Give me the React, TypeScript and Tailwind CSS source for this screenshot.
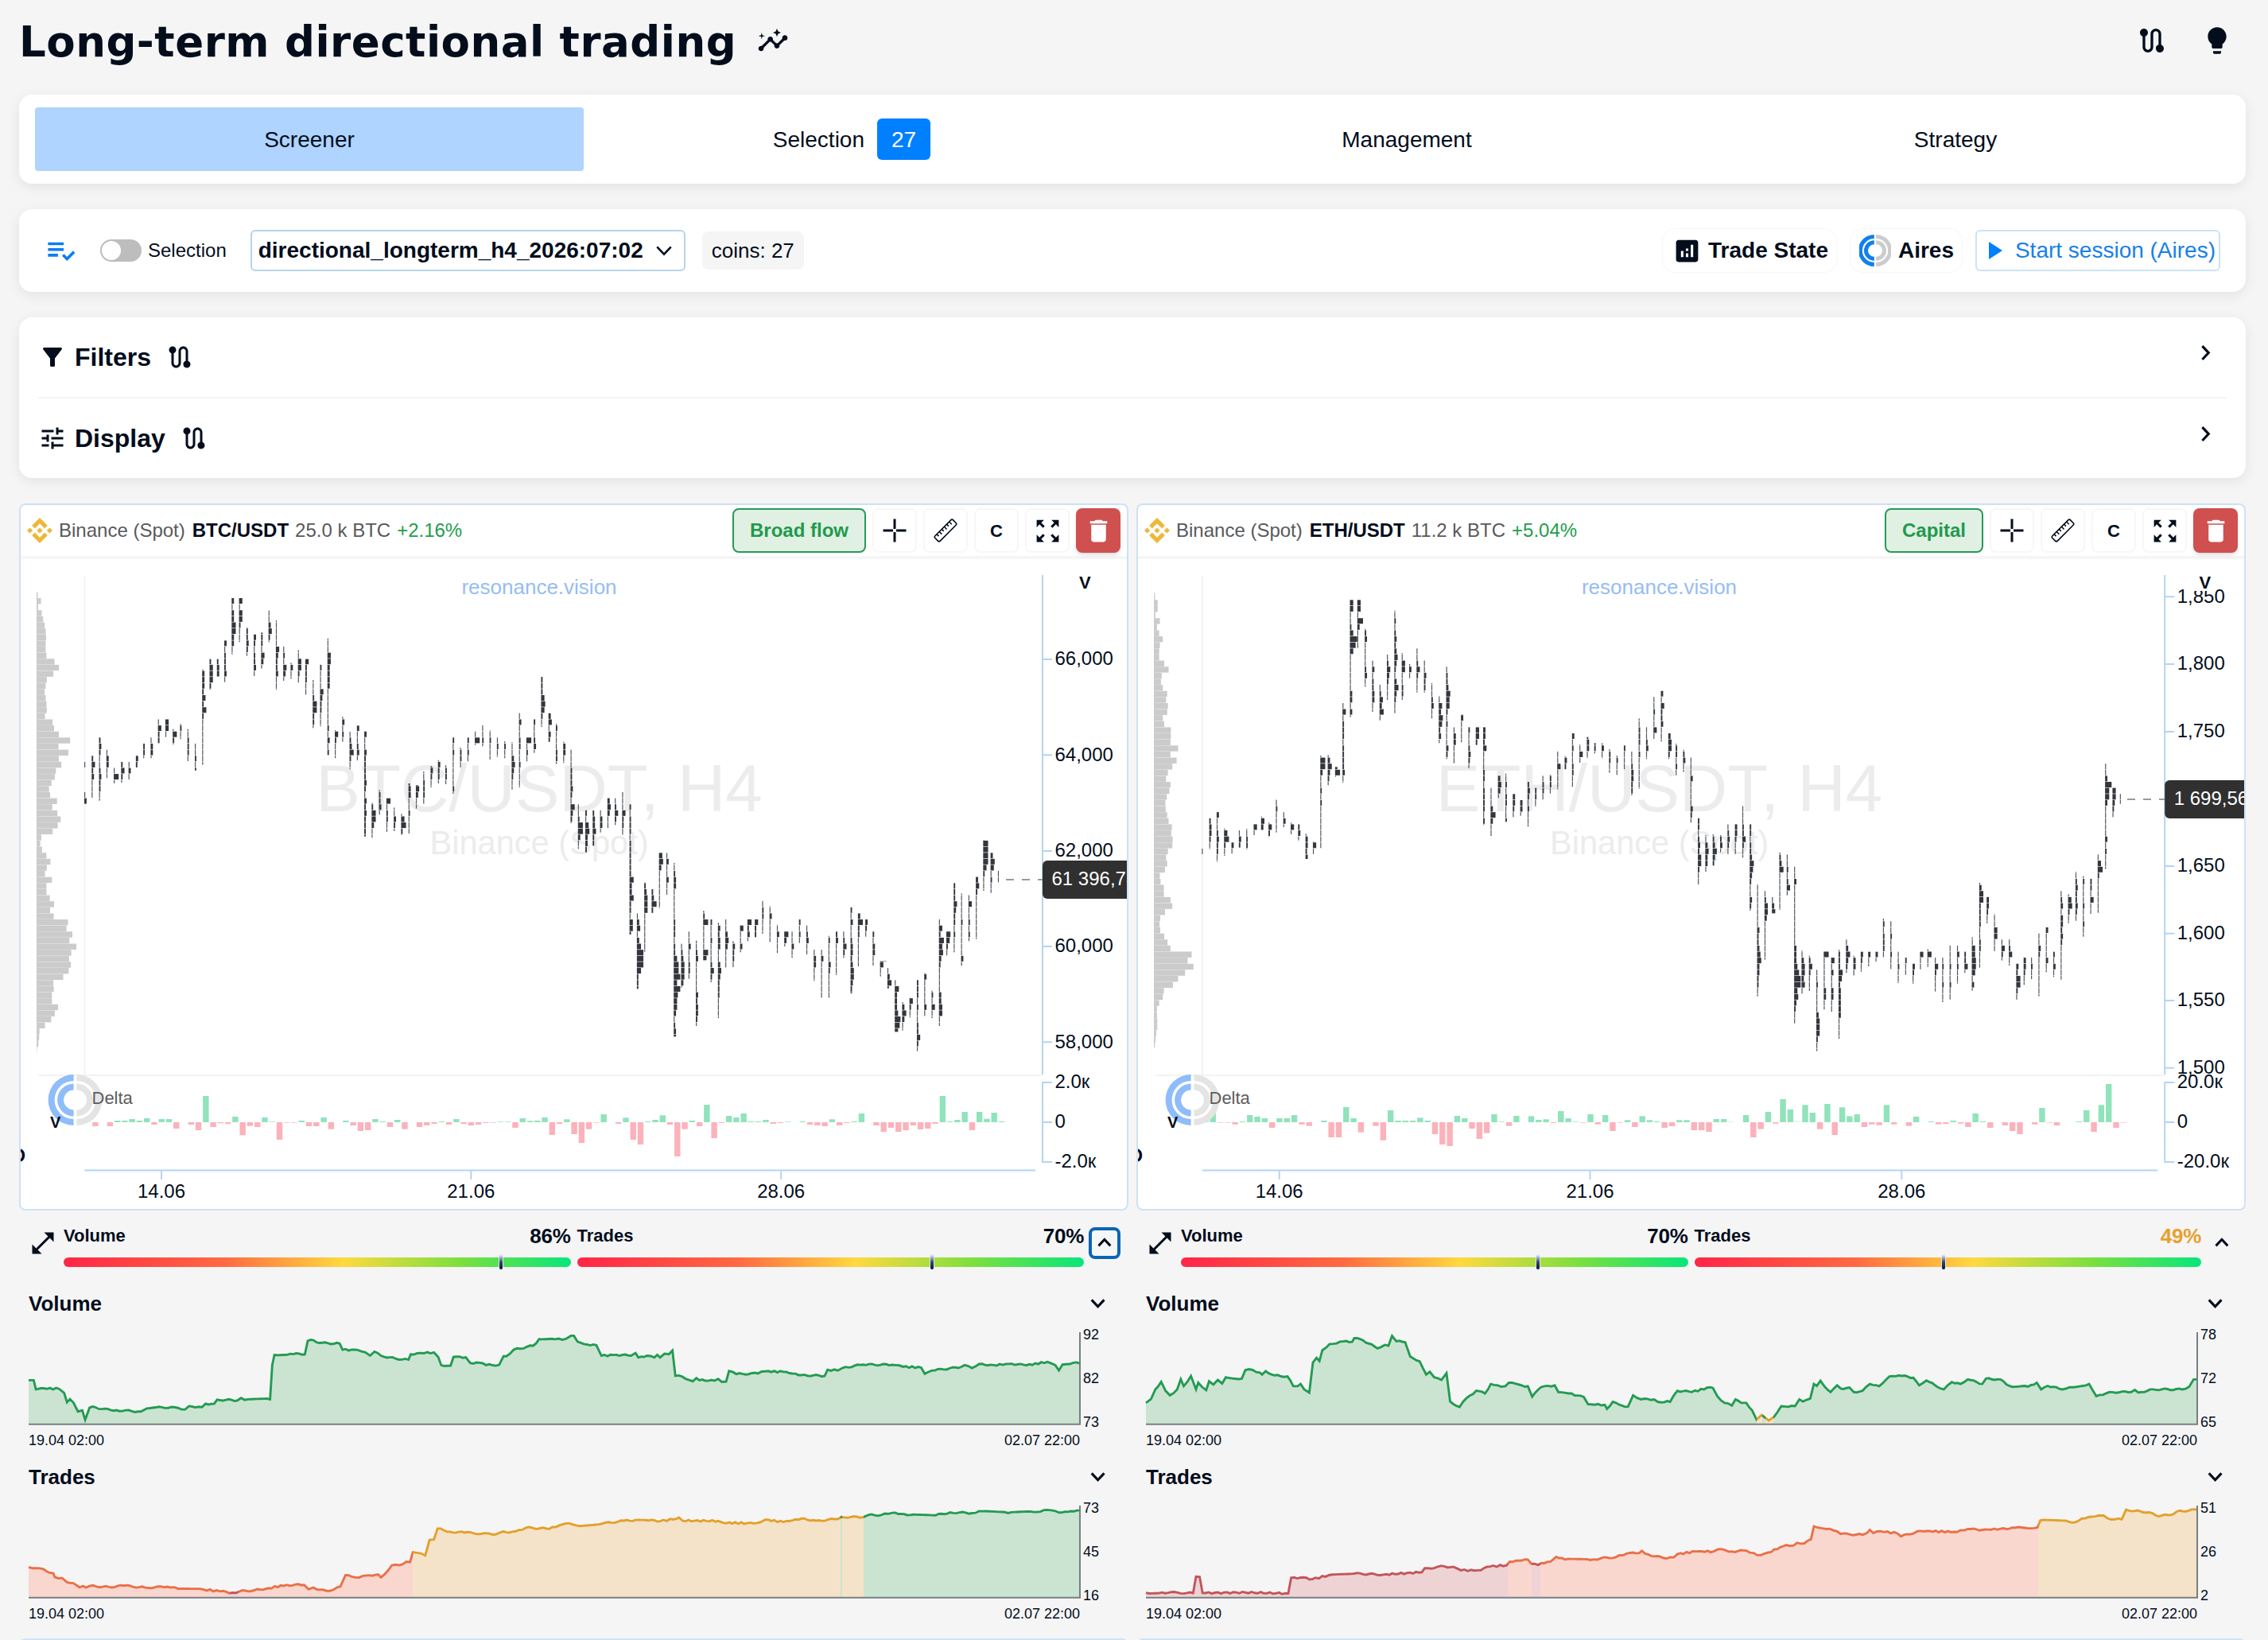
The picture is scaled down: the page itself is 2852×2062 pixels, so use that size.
import type { ReactNode } from 'react'
import {
  MdAnalytics,
  MdDelete,
  MdFilterAlt,
  MdInsights,
  MdLightbulb,
  MdOpenInFull,
  MdPlaylistAddCheck,
  MdRoute,
  MdTune,
  MdZoomOutMap,
} from 'react-icons/md'
import { SiBinance } from 'react-icons/si'

// Each candle is "top bottom widths": prices in thirds of a pixel, one width digit per cluster row
const BTC_CANDLES = `1014 1172 1000013;991 1150 2423111;922 1160 23211232211;968 1075 13311;1036 1095 161;1014 1092 2421;1014 1082 131;991 1036 32;945 1000 221;922 1000 1331
853 945 1422;853 920 441;890 948 152;870 928 121;890 1011 112221;943 1046 112122;665 1025 13332425211111111;626 742 24442;626 695 233;556 713 3122231
396 608 3133553311;396 562 41442111;506 614 122321;533 690 3212231;526 662 2221431;443 562 113421;480 742 111114322311;579 708 121431;640 700 1311;592 718 1144211
626 762 422211;705 886 111255221;646 880 21114322111;548 988 11144333311111121312;894 1000 142111;844 938 13121;900 1042 1235211;877 1008 311231;898 1295 3113222232132322221;1168 1300 1255311
1120 1213 12231;1151 1278 512211;1186 1275 11321;1210 1290 1462;1095 1284 233112111;1101 1190 3431;1050 1175 1122211;1030 1110 2321;1007 1095 13221;1026 1098 1221
922 1134 2121111121;960 1035 1221;922 1012 2121;898 950 161;876 955 1121;896 1005 21211;920 995 2121;936 1000 121;940 1118 111343211;828 1110 11311221121111
922 1012 6121;853 980 211231;693 882 222454211;828 938 134132;870 1022 12111221;938 1018 1331;966 1245 1112223215321;1174 1342 11266311;1195 1355 2145332;1197 1330 233422
1195 1280 1331;1150 1265 34311;1150 1252 12421;1127 1290 11142211;1174 1665 2122212222225335221442;1585 1870 13413588852221;1468 1730 1234441111111;1492 1585 2362;1357 1565 453111111;1357 1517 1311311
1395 2050 1123311111222122466848544312332;1700 1865 12344431;1653 1832 11311221;1688 2010 112311111323321;1575 1762 126111164;1608 1845 21121112421;1620 1980 1323311343222111;1608 1790 113431111;1690 1788 13221;1630 1732 41131
1608 1690 5231;1608 1675 422;1537 1662 212211;1558 1693 1131111;1628 1735 11311;1653 1710 531;1653 1753 11311;1608 1697 2121;1631 1740 12311;1722 1840 133111
1722 1907 131111111;1670 1907 12111321111;1653 1818 23111111;1653 1753 12421;1562 1887 213112332344322;1585 1785 362211111;1608 1673 321;1653 1782 2133111;1765 1823 84;1790 1868 13521
1835 2032 1533347641;1920 2027 13531;1903 1978 1421;1835 2105 222121122421;1810 1975 13111131;1877 1980 12141;1606 2010 2142645321111334411;1653 1747 5421;1470 1732 222432212111;1510 1783 111112111113
1515 1690 14112121;1446 1682 63421111111;1308 1500 266664211;1357 1508 3541211;1423 1468 11`

const ETH_CANDLES = `1341 1362 1;1226 1343 23321;1203 1390 311232211;1265 1368 14621;1318 1360 31;1272 1337 132;1266 1343 11221;1249 1290 41;1220 1273 143;1243 1297 142
1155 1280 1121111;1203 1260 131;1243 1287 141;1249 1310 231;1285 1380 133231;1314 1362 141;990 1340 1663112121111111;988 1102 135321;1033 1070 36;792 1092 141222122223
403 845 44112497411111133131;403 585 44173111;512 730 1231111231;632 825 131223311;723 857 124351;609 780 12432111;443 830 112123234321353211;603 780 114411221;645 698 131;586 752 1124211
630 752 113221;717 850 1112311;765 943 114354231;655 1003 1223544212111321;882 1022 1331111;835 940 33111;883 1038 2112321;883 953 442;883 1252 33241112212222121;1112 1295 11136311
1066 1150 3431;1058 1240 112122112;1135 1222 3321;1158 1217 331;1089 1258 23212111;1112 1183 221;1066 1158 1221;1062 1133 122;973 1117 1141111;992 1043 132
906 1108 312112211;948 1017 114;920 1000 2331;943 982 22;943 1000 131;966 1055 1221;990 1063 1211;952 1043 2111;975 1140 1123322;850 1115 112221211111
883 1003 112311;768 930 1121141;746 937 31422311;906 1003 3442;945 1067 122121;968 1052 1231;996 1243 11131111321;1226 1478 22123244211;1290 1428 1134331;1287 1405 1235321
1290 1355 1231;1249 1363 12321;1249 1363 33211;1180 1375 111224211;1249 1575 22122354321132;1475 1898 11111111322345332211;1500 1760 12443111111;1523 1585 1341;1355 1572 1235111111;1362 1517 1121241
1408 2000 1131111111111333468845321;1725 1888 11344341;1745 1878 124211;1798 2105 1121111344421;1728 1948 6111113311;1750 1960 1413113311;1722 2058 122254233333111;1683 1810 135321;1745 1822 1331;1730 1805 3211
1730 1785 311;1730 1767 31;1605 1753 1212221;1613 1795 11121121;1730 1848 11211;1750 1817 1211;1775 1850 3211;1730 1800 411;1720 1787 151;1750 1880 114211
1750 1920 1121121;1705 1910 111211211;1707 1850 1312111;1730 1810 2241;1675 1877 114455413;1470 1790 13552222112211;1523 1623 33211;1588 1728 111441;1682 1763 1421;1682 1782 12411
1775 1913 325521;1750 1855 13321;1750 1833 1121;1660 1898 1132111111;1637 1807 31111311;1730 1825 2131;1500 1835 123133232111111;1513 1622 14521;1428 1617 112322321;1445 1673 1211121121
1453 1587 222141;1362 1583 1462111111;1020 1418 11385531111131211;1110 1222 44321;1133 1172 11`

const BTC_PROFILE = '3 12 4 14 18 22 25 26 25 25 27 49 61 46 28 25 22 25 27 28 23 44 48 61 92 60 87 61 68 53 50 41 34 37 56 43 57 66 58 44 13 10 15 27 38 28 23 42 27 27 36 48 37 47 86 82 98 90 109 95 89 94 88 73 46 47 42 42 59 50 40 23 8 7 5 1'
const ETH_PROFILE = '1 10 10 3 16 8 14 24 16 14 14 28 40 21 19 24 36 33 38 36 24 28 46 46 45 66 45 62 50 38 33 45 42 35 31 32 36 40 49 47 51 50 38 33 36 30 16 18 27 27 45 50 30 17 15 17 28 37 45 103 92 108 85 66 52 27 24 14 8 8 9 9 6 4 1'

const BTC_DELTA = '0 -15 0 -15 6 6 12 6 15 -9 12 12 -24 0 -9 -30 99 -18 -4 -6 21 -49 -14 -18 18 2 -66 -2 -2 6 -15 -15 18 -26 0 6 -12 -33 -30 12 3 -18 9 -26 0 -18 -12 -6 3 -9 12 -6 -12 -9 -3 -2 2 2 -21 15 5 6 18 -48 -6 11 -45 -78 -26 -2 30 0 -6 17 -66 -84 3 9 26 -9 -129 -26 6 -15 66 -60 -3 24 18 33 3 3 9 -6 -3 2 0 3 -9 -12 -15 11 -12 -3 3 33 0 -12 -36 -21 -36 -30 -12 -27 -24 -6 99 3 9 39 -30 39 13 36 3'
const ETH_DELTA = '6 36 -2 -2 -8 3 27 21 15 -21 15 15 27 -8 -14 0 6 -57 -57 57 15 -38 0 -14 -68 45 6 6 6 17 6 -45 -84 -90 24 15 -24 -63 -41 30 2 -14 24 0 23 9 11 -3 42 15 2 -2 30 -8 27 -33 -2 8 -18 23 8 3 -21 -15 8 8 -30 -30 -36 12 12 1 0 27 -57 -26 39 -5 87 48 1 65 36 -26 69 -48 56 23 30 -18 -8 -11 65 -8 0 -14 21 0 3 -8 -6 6 -5 -18 33 3 -21 0 -12 -33 -45 0 -8 54 -2 -12 0 0 3 45 -36 65 144 -21 -2'

const BTC_VOLUME = '39,606 46,606 49,640 56,636 81,638 88,653 92,688 96,676 101,690 107,722 113,718 117,753 123,708 131,706 140,713 160,717 190,722 210,708 240,706 255,714 260,702 278,706 283,693 295,693 299,678 327,681 332,672 337,679 372,677 375,550 378,512 400,508 420,510 424,460 432,458 440,468 468,470 472,493 493,494 503,502 510,515 516,500 525,515 545,526 563,530 566,510 575,506 598,503 604,520 608,550 621,552 625,520 642,521 648,542 665,543 670,550 688,549 694,517 698,517 708,493 735,478 743,454 765,454 780,453 787,441 791,441 796,463 805,472 822,476 829,515 850,512 870,515 876,505 880,522 892,515 902,522 906,512 910,522 916,508 922,510 927,496 931,590 940,592 955,610 960,598 964,606 985,608 990,601 995,612 1001,611 1005,572 1015,583 1045,581 1055,573 1080,575 1105,587 1137,590 1141,567 1155,570 1162,560 1190,548 1230,549 1245,556 1270,559 1275,582 1285,570 1325,557 1330,550 1340,561 1350,546 1370,550 1395,545 1415,551 1444,538 1455,550 1460,570 1465,548 1480,541 1489,544'
const BTC_TRADES = '39,1298 50,1302 60,1306 68,1319 73,1321 75,1335 85,1338 92,1354 100,1357 109,1373 114,1368 118,1374 123,1368 150,1372 170,1367 200,1374 230,1371 245,1378 280,1381 303,1388 320,1393 330,1388 350,1384 370,1376 395,1364 419,1364 425,1380 432,1374 440,1382 450,1386 460,1381 469,1370 476,1328 490,1336 505,1329 521,1325 525,1336 530,1325 540,1291 555,1287 560,1278 565,1280 569,1243 580,1247 586,1255 592,1197 598,1196 603,1155 620,1167 640,1170 683,1177 690,1169 710,1166 725,1152 757,1156 780,1136 795,1144 830,1137 860,1126 880,1123 890,1124 910,1128 933,1118 936,1114 941,1126 990,1127 997,1134 1030,1135 1048,1132 1055,1122 1080,1131 1105,1118 1125,1126 1155,1120 1160,1112 1190,1113 1197,1105 1215,1105 1230,1097 1255,1105 1290,1106 1310,1095 1340,1098 1355,1091 1390,1098 1425,1094 1444,1086 1455,1090 1460,1096 1489,1088'
const ETH_VOLUME = '23,690 30,676 36,640 44,612 50,645 56,662 66,640 71,602 75,628 85,590 92,640 95,615 106,643 110,610 116,622 122,605 128,618 133,595 155,600 160,568 170,568 180,578 183,585 188,572 200,588 218,592 226,628 232,628 236,620 241,640 248,652 253,540 258,523 262,535 266,495 276,472 295,462 307,464 310,450 322,458 330,470 342,488 352,475 357,478 362,442 368,462 380,465 387,518 400,536 409,585 414,575 420,595 430,605 437,580 442,685 455,705 460,685 478,645 490,655 498,620 512,630 518,628 523,615 545,630 549,628 555,667 567,632 586,625 591,650 605,655 626,668 632,695 655,697 658,712 666,686 675,697 687,704 694,662 705,677 723,677 728,686 745,686 755,645 775,650 800,632 804,635 810,665 820,690 830,700 835,677 843,690 850,690 858,718 864,752 871,735 876,745 881,755 888,742 898,702 917,702 923,677 928,685 938,674 943,620 947,627 952,608 958,630 966,650 975,625 980,637 992,633 998,650 1010,645 1020,620 1033,628 1047,592 1060,588 1080,597 1088,625 1098,607 1110,625 1122,640 1133,613 1145,620 1155,603 1175,620 1180,600 1200,603 1212,627 1238,630 1250,615 1256,640 1265,627 1285,640 1300,632 1322,620 1332,665 1350,650 1380,650 1385,642 1390,652 1410,640 1450,640 1460,630 1466,603 1471,603'
const ETH_TRADES = '23,1393 45,1392 88,1394 92,1333 97,1334 101,1394 160,1392 219,1396 223,1338 240,1336 252,1343 275,1328 310,1322 350,1326 403,1317 407,1302 420,1302 430,1293 450,1301 457,1310 480,1310 497,1296 520,1291 524,1278 549,1270 554,1286 563,1290 568,1283 580,1278 588,1260 600,1270 635,1272 650,1265 670,1261 685,1248 703,1245 706,1238 711,1249 735,1264 750,1262 755,1250 780,1240 805,1240 811,1232 830,1240 850,1237 865,1254 880,1244 905,1216 915,1218 920,1208 930,1210 939,1195 943,1147 965,1156 980,1175 1010,1178 1016,1172 1020,1160 1025,1172 1035,1165 1058,1173 1063,1184 1090,1164 1140,1168 1155,1157 1175,1160 1200,1156 1220,1152 1251,1151 1255,1125 1290,1126 1303,1132 1312,1118 1335,1107 1342,1107 1348,1118 1367,1121 1373,1085 1385,1090 1405,1095 1415,1108 1435,1105 1443,1092 1471,1085'

const GREEN = ['#239b52', '#cbe4d2']
const AMBER = ['#e3a02b', '#f4e3c9']
const ORANGE = ['#ea7048', '#f9d6ce']
const RED = ['#c4555b', '#eed3d5']

type Band = { to: number; tone: string[] }

type Mini = {
  id: string
  title: string
  points: string
  x0: number
  y0: number
  labels: string[]
  bands: Band[]
}

type Coin = {
  symbol: string
  volume: string
  change: string
  tag: string
  left: number
  firstX: number
  step: number
  rowTop: number
  profileX: number
  plotX: number
  axisX: number
  center: number
  logoX: number
  vX: number
  candles: string
  profile: string
  delta: string
  prices: [string, number][]
  times: [string, number][]
  deltaMax: string
  last: string
  lastY: number
  dashX: number
  gauges: [number, number]
  focused: boolean
  minis: Mini[]
}

const COINS: Coin[] = [
  {
    symbol: 'BTC/USDT',
    volume: '25.0 k BTC',
    change: '+2.16%',
    tag: 'Broad flow',
    left: 26,
    firstX: 106.6,
    step: 9.265,
    rowTop: 396,
    profileX: 46,
    plotX: 106.5,
    axisX: 1311,
    center: 678,
    logoX: 95,
    vX: 1357,
    candles: BTC_CANDLES,
    profile: BTC_PROFILE,
    delta: BTC_DELTA,
    prices: [['66,000', 829], ['64,000', 949.3], ['62,000', 1070], ['60,000', 1190], ['58,000', 1310.3]],
    times: [['14.06', 203], ['21.06', 592.3], ['28.06', 982.2]],
    deltaMax: '2.0к',
    last: '61 396,78',
    lastY: 1106,
    dashX: 1265,
    gauges: [86.3, 70.1],
    focused: true,
    minis: [
      { id: 'bv', title: 'Volume', points: BTC_VOLUME, x0: 39, y0: 428, labels: ['92', '82', '73'], bands: [{ to: 1, tone: GREEN }] },
      {
        id: 'bt', title: 'Trades', points: BTC_TRADES, x0: 39, y0: 1070, labels: ['73', '45', '16'],
        bands: [
          { to: 0.191, tone: ORANGE }, { to: 0.2, tone: RED }, { to: 0.365, tone: ORANGE }, { to: 0.7723, tone: AMBER },
          { to: 0.774, tone: GREEN }, { to: 0.7945, tone: AMBER }, { to: 1, tone: GREEN },
        ],
      },
    ],
  },
  {
    symbol: 'ETH/USDT',
    volume: '11.2 k BTC',
    change: '+5.04%',
    tag: 'Capital',
    left: 1431,
    firstX: 1511.9,
    step: 9.31,
    rowTop: 403,
    profileX: 1451.2,
    plotX: 1512,
    axisX: 2722.2,
    center: 2086.5,
    logoX: 1500,
    vX: 2765.5,
    candles: ETH_CANDLES,
    profile: ETH_PROFILE,
    delta: ETH_DELTA,
    prices: [['1,850', 750.3], ['1,800', 835], ['1,750', 920], ['1,650', 1089], ['1,600', 1173.7], ['1,550', 1258], ['1,500', 1342.7]],
    times: [['14.06', 1608.7], ['21.06', 1999.5], ['28.06', 2391.3]],
    deltaMax: '20.0к',
    last: '1 699,56',
    lastY: 1005,
    dashX: 2675,
    gauges: [70.4, 49.1],
    focused: false,
    minis: [
      {
        id: 'ev', title: 'Volume', points: ETH_VOLUME, x0: 23, y0: 428, labels: ['78', '72', '65'],
        bands: [
          { to: 0.581, tone: GREEN }, { to: 0.586, tone: AMBER }, { to: 0.5895, tone: GREEN },
          { to: 0.597, tone: AMBER }, { to: 1, tone: GREEN },
        ],
      },
      {
        id: 'et', title: 'Trades', points: ETH_TRADES, x0: 23, y0: 1070, labels: ['51', '26', '2'],
        bands: [
          { to: 0.344, tone: RED }, { to: 0.367, tone: ORANGE }, { to: 0.375, tone: RED },
          { to: 0.849, tone: ORANGE }, { to: 1, tone: AMBER },
        ],
      },
    ],
  },
]

const ROW = 22.87
const WIDTHS = [0, 1.2, 1.9, 2.9, 4.2, 5.2, 6.2, 7.2, 8.2, 9.2]

function Chevron({ dir, w = 18, stroke = 3 }: { dir: 'up' | 'down' | 'right'; w?: number; stroke?: number }) {
  const d = { up: 'M4.500 15.500l7.500-8 7.500 8', down: 'M4.500 8l7.500 8 7.500-8', right: 'M8 4l7.500 8L8 20' }[dir]
  return (
    <svg width={w * 1.4} height={w * 1.4} viewBox="0 0 24 24" fill="none" stroke="currentColor" strokeWidth={stroke}>
      <path d={d} />
    </svg>
  )
}

function RingLogo({ r, blue, gray }: { r: number; blue: string; gray: string }) {
  const ring = (out: number, inn: number, side: number) => {
    const s = side < 0 ? 0 : 1
    const x = side * 1.9
    return `M${x} ${-out}A${out} ${out} 0 0 ${s} ${x} ${out}V${inn}A${inn} ${inn} 0 0 ${1 - s} ${x} ${-inn}Z`
  }
  return (
    <g transform={`scale(${r / 32})`}>
      <path d={ring(32, 24, -1)} fill={blue} />
      <path d={ring(20.5, 12.5, -1)} fill={blue} />
      <path d={ring(32, 24, 1)} fill={gray} />
      <path d={ring(20.5, 12.5, 1)} fill={gray} />
    </g>
  )
}

function ToolButton({ children }: { children: ReactNode }) {
  return (
    <button className="flex h-14 w-14 items-center justify-center rounded-lg border-2 border-[#f7f7f7] bg-white text-[22px] font-bold">
      {children}
    </button>
  )
}

function ClusterChart({ coin }: { coin: Coin }) {
  const { firstX, step, rowTop, axisX, plotX, left } = coin
  const candles = coin.candles.split(/[;\n]/).map(c => c.split(' '))

  return (
    <svg
      width={1391}
      height={817}
      viewBox={`${left} 703 1391 817`}
      className="block overflow-hidden"
      fontFamily="Liberation Sans, Arial, sans-serif"
      fontSize={24}
      fill="#030d1c"
    >
      <g stroke="#f3f3f3" strokeWidth={2}>
        <path d={`M${plotX} 724V1351`} />
        <path d={`M${coin.profileX + 2} 1352H${axisX}`} />
      </g>

      <g textAnchor="middle" fill="#ececec">
        <text x={coin.center} y={1020} fontSize={83.5}>{coin.symbol}, H4</text>
        <text x={coin.center} y={1073.500} fontSize={41.6}>Binance (Spot)</text>
      </g>
      <text x={coin.center} y={747} fontSize={26} textAnchor="middle" fill="#96bdf3">resonance.vision</text>

      {/* volume profile */}
      <g fill="#cbcbcb">
        {coin.profile.split(' ').map((w, i) => (
          <rect key={i} x={coin.profileX} y={620 + (rowTop + (i - 1) * ROW) / 3} width={Number(w) * 0.459} height={7.4} />
        ))}
        <rect x={coin.profileX} y={745} width={1.2} height={572} />
      </g>

      {/* clusters */}
      {candles.map(([t, b, widths], i) => {
        const top = Number(t)
        const bottom = Number(b)
        const first = Math.floor((top - rowTop + 2) / ROW)
        const rows = Math.ceil((bottom - rowTop - 2) / ROW) - first
        return Array.from({ length: rows }, (_, k) => {
          const w = Number(widths[k] ?? 1)
          const y = Math.max(top, rowTop + (first + k) * ROW)
          const y2 = Math.min(bottom, rowTop + (first + k + 1) * ROW - 1.8)
          if (y2 <= y || !w) return null
          return (
            <rect
              key={`${i}-${k}`}
              x={firstX + i * step - 0.6}
              y={620 + y / 3}
              width={WIDTHS[w]}
              height={(y2 - y) / 3}
              fill={w === 1 ? '#54575c' : '#33363d'}
            />
          )
        })
      })}

      {/* delta */}
      {coin.delta.split(' ').map((v, i) => {
        const h = Number(v) / 3
        if (!h) return null
        return (
          <rect
            key={i}
            x={firstX + i * step + 0.3}
            y={h > 0 ? 1411 - h : 1411}
            width={7.4}
            height={Math.abs(h)}
            fill={h > 0 ? '#90e3bb' : '#fbb2bb'}
          />
        )
      })}

      <g transform={`translate(${coin.logoX - 0.5} 1383)`}>
        <RingLogo r={32} blue="#8fbcfa" gray="#e4e4e4" />
      </g>
      <text x={coin.logoX + 20.5} y={1388} fontSize={22} fill="#5c5c5c">Delta</text>
      <text x={coin.logoX - 32} y={1418} fontSize={20} fontWeight={700}>V</text>
      <text x={left + 6} y={1461} fontSize={24} fontWeight={700} textAnchor="end">D</text>

      {/* axes */}
      <g stroke="#b3d4f3" strokeWidth={2} fill="none">
        <path d={`M${axisX} 723V1351`} />
        <path d={`M${axisX + 12} 1361H${axisX}V1461H${axisX + 12}M${axisX} 1411H${axisX + 12}`} />
        <path d={`M${plotX} 1471.5H${axisX - 9}`} />
        {coin.prices.map(([label, y]) => <path key={label} d={`M${axisX} ${y}H${axisX + 12}`} />)}
        {coin.times.map(([label, x]) => <path key={label} d={`M${x} 1471V1483`} />)}
      </g>
      {coin.prices.map(([label, y]) => <text key={label} x={axisX + 15.5} y={y + 7.3}>{label}</text>)}
      <text x={axisX + 15.5} y={1368}>{coin.deltaMax}</text>
      <text x={axisX + 15.5} y={1418}>0</text>
      <text x={axisX + 15.5} y={1468}>-{coin.deltaMax}</text>
      {coin.times.map(([label, x]) => <text key={label} x={x} y={1505.7} textAnchor="middle">{label}</text>)}

      <rect x={coin.vX - 8} y={722} width={27} height={21} fill="#fff" />
      <text x={coin.vX} y={740} fontSize={22} fontWeight={700}>V</text>

      <path d={`M${coin.dashX} ${coin.lastY}H${axisX}`} stroke="#9a9a9a" strokeWidth={2} strokeDasharray="10 10" />
      <rect x={axisX} y={coin.lastY - 24} width={130} height={48} rx={6} fill="#303030" />
      <text x={axisX + 11.5} y={coin.lastY + 6.5} fill="#fff">{coin.last}</text>
    </svg>
  )
}

function withNoise(points: string) {
  const pts = points.split(' ').map(p => p.split(',').map(Number))
  const out: number[][] = []
  pts.forEach(([x, y], i) => {
    out.push([x, y])
    const next = pts[i + 1]
    if (!next) return
    const n = Math.floor((next[0] - x) / 4)
    for (let k = 1; k < n; k++) {
      const px = x + ((next[0] - x) * k) / n
      out.push([px, y + ((next[1] - y) * k) / n + Math.sin(px * 12.9) * 3])
    }
  })
  return out.map(p => `${p[0].toFixed(1)},${p[1].toFixed(1)}`).join(' ')
}

function MiniChart({ mini }: { mini: Mini }) {
  const width = mini.x0 === 39 ? 1450 : 1448
  const bottom = mini.y0 + 341
  const line = withNoise(mini.points)
  const stops = (tone: number) =>
    mini.bands.flatMap((b, i) => [
      <stop key={`${i}a`} offset={i ? mini.bands[i - 1].to : 0} stopColor={b.tone[tone]} />,
      <stop key={`${i}b`} offset={b.to} stopColor={b.tone[tone]} />,
    ])
  const span = { gradientUnits: 'userSpaceOnUse' as const, x1: mini.x0, x2: mini.x0 + width, y1: 0, y2: 0 }

  return (
    <section className="h-[218px] pl-3">
      <div className="flex h-[42px] items-center justify-between pr-[26px]">
        <h3 className="text-[26px] font-bold leading-none">{mini.title}</h3>
        <Chevron dir="down" />
      </div>
      <div className="mt-[15px] flex h-[116px] items-center gap-1">
        <svg width={1322} height={116} viewBox={`${mini.x0} ${mini.y0} ${width} 342`} preserveAspectRatio="none" className="overflow-visible">
          <defs>
            <linearGradient id={`${mini.id}-line`} {...span}>{stops(0)}</linearGradient>
            <linearGradient id={`${mini.id}-fill`} {...span}>{stops(1)}</linearGradient>
          </defs>
          <polygon points={`${mini.x0},${bottom} ${line} ${mini.x0 + width},${bottom}`} fill={`url(#${mini.id}-fill)`} />
          <polyline points={line} fill="none" stroke={`url(#${mini.id}-line)`} strokeWidth={2.9} vectorEffect="non-scaling-stroke" />
          <path
            d={`M${mini.x0} ${bottom}H${mini.x0 + width}V${mini.y0}`}
            fill="none"
            stroke="#777f82"
            strokeWidth={2}
            vectorEffect="non-scaling-stroke"
          />
        </svg>
        <div className="flex h-32 shrink-0 flex-col justify-between text-lg leading-[18px]">
          {mini.labels.map(l => <span key={l}>{l}</span>)}
        </div>
      </div>
      <div className="mt-2 flex h-6 w-[1322px] items-center justify-between text-lg leading-6">
        <span>19.04 02:00</span>
        <span>02.07 22:00</span>
      </div>
    </section>
  )
}

function Gauge({ label, value }: { label: string; value: number }) {
  return (
    <div className="flex-1">
      <div className="flex h-[30px] items-center justify-between font-bold leading-none">
        <span className="text-[22px]">{label}</span>
        <span className={value < 50 ? 'text-[26px] tracking-[-0.3px] text-[#e8a02c]' : 'text-[26px] tracking-[-0.3px]'}>
          {Math.round(value)}%
        </span>
      </div>
      <div className="relative mt-3 h-3 rounded-full bg-[linear-gradient(90deg,#ff2546_0%,#ff6a42_32%,#ffd93f_55%,#7ddf3e_78%,#08e67a_100%)]">
        <span
          className="absolute -top-1 h-5 w-[6px] -translate-x-1/2 rounded-full border border-[#dfe6f0] bg-gradient-to-b from-[#e4eaf5] via-[#34466b] to-[#0a1830]"
          style={{ left: `${value}%` }}
        />
      </div>
    </div>
  )
}

function CoinColumn({ coin }: { coin: Coin }) {
  return (
    <div className="flex w-[1395px] flex-col">
      <div className="h-[889px] overflow-hidden rounded-lg border-2 border-[#cfe2f5] bg-white">
        <div className="flex h-[68px] items-center gap-2 border-b-4 border-[#f6f6f6] pr-2 pl-2">
          <SiBinance size={32} color="#edb83a" />
          <p className="flex flex-1 gap-2 text-2xl leading-none text-[#58595c]">
            <span className="mr-px">Binance (Spot)</span>
            <span className="font-bold text-[#030d1c]">{coin.symbol}</span>
            <span>{coin.volume}</span>
            <span className="text-[#1f9d4d]">{coin.change}</span>
          </p>
          <button className="h-14 rounded-lg border-2 border-[#27995a] bg-[#e0f0e3] px-5 text-2xl font-bold text-[#1f9a4c]">
            {coin.tag}
          </button>
          <ToolButton>
            <svg width="30" height="30" viewBox="0 0 30 30" stroke="currentColor" strokeWidth="3">
              <path d="M15 .5V13M15 17v12.500M.5 15H13M17 15h12.500" />
            </svg>
          </ToolButton>
          <ToolButton>
            <svg width="30" height="30" viewBox="0 0 30 30" fill="none" stroke="currentColor" strokeWidth="1.600">
              <g transform="rotate(-45 15 15)">
                <rect x="-1" y="10.500" width="32" height="9" rx="2" />
                <path d="M4 10.500v3.500M8.400 10.500v4.500M12.800 10.500v3.500M17.200 10.500v4.500M21.600 10.500v3.500M26 10.500v4.500" />
              </g>
            </svg>
          </ToolButton>
          <ToolButton>C</ToolButton>
          <ToolButton><MdZoomOutMap size={37} /></ToolButton>
          <button className="flex h-14 w-14 items-center justify-center rounded-lg bg-[#d05050] text-white shadow-md">
            <MdDelete size={37} />
          </button>
        </div>
        <ClusterChart coin={coin} />
      </div>

      <div className="flex h-24 gap-2 pt-[17px] pr-2.5 pl-3">
        <MdOpenInFull size={36} className="mt-1.5" />
        <Gauge label="Volume" value={coin.gauges[0]} />
        <Gauge label="Trades" value={coin.gauges[1]} />
        <button
          className={
            coin.focused
              ? '-ml-0.5 mt-1 flex h-10 w-10 items-center justify-center rounded-lg border-4 border-[#0b65b5] bg-[#f5f6f6]'
              : '-ml-0.5 mt-1 flex h-10 w-10 items-center justify-center'
          }
        >
          <Chevron dir="up" w={17} />
        </button>
      </div>
      {coin.minis.map(m => <MiniChart key={m.id} mini={m} />)}
      <div className="mt-1.5 h-2 rounded-t-lg border-2 border-b-0 border-[#cfe2f5] bg-white" />
    </div>
  )
}

const CARD = 'rounded-2xl bg-white shadow-[0_4px_16px_rgba(0,0,0,0.08)]'

export default function App() {
  return (
    <div className="h-[2062px] w-[2852px] overflow-hidden bg-[#f5f5f5] pr-7 pl-6 font-['Liberation_Sans',Arial,sans-serif] text-[#030d1c]">
      <header className="flex h-[119px] items-start">
        <h1 className="mt-[25px] w-[928px] text-[53px] leading-[56px] font-bold tracking-[0.5px] whitespace-nowrap font-['DejaVu_Sans',sans-serif]">
          Long-term directional trading
        </h1>
        <MdInsights size={40} className="mt-[31px]" />
        <div className="mt-[31px] mr-4 ml-auto flex gap-[42px]">
          <MdRoute size={40} />
          <MdLightbulb size={40} />
        </div>
      </header>

      <nav className={`${CARD} grid h-28 grid-cols-4 px-5 py-4 text-[28px]`}>
        <div className="flex items-center justify-center rounded-sm bg-[#aed4ff] pt-0.5">Screener</div>
        <div className="flex items-center justify-center gap-4 pr-4">
          <span className="pt-0.5">Selection</span>
          <span className="flex h-[52px] items-center rounded-md bg-[#0080ff] px-[18px] pt-0.5 text-white">27</span>
        </div>
        <div className="flex items-center justify-center pt-0.5">Management</div>
        <div className="flex items-center justify-center pt-0.5">Strategy</div>
      </nav>

      <div className={`${CARD} mt-8 flex h-[104px] items-center pr-8 pl-[31px] text-[28px]`}>
        <MdPlaylistAddCheck size={43} color="#0a7cf5" />
        <div className="ml-7 flex h-7 w-[52px] items-center rounded-full bg-[#bdbdbd] px-0.5">
          <span className="h-6 w-6 rounded-full bg-white" />
        </div>
        <span className="ml-2 text-2xl">Selection</span>
        <button className="ml-[30px] flex h-[52px] w-[547px] items-center justify-between rounded-md border-2 border-[#b5d4ec] pr-[11px] pl-2 font-bold">
          directional_longterm_h4_2026:07:02
          <Chevron dir="down" w={20} stroke={2.2} />
        </button>
        <span className="ml-[21px] flex h-12 items-center rounded-lg bg-[#f5f5f5] px-3 text-[26px]">coins: 27</span>

        <button className="ml-auto flex h-[54px] items-center gap-2 rounded-2xl pr-2.5 pl-3 font-bold shadow-[0_0_3px_rgba(0,0,0,0.08)]">
          <MdAnalytics size={37} />
          Trade State
        </button>
        <button className="ml-[18px] flex h-[54px] items-center gap-[9px] rounded-2xl pr-[10px] pl-[11px] font-bold shadow-[0_0_3px_rgba(0,0,0,0.08)]">
          <svg width="40" height="40" viewBox="-20 -20 40 40"><RingLogo r={20} blue="#1080ea" gray="#cccccc" /></svg>
          Aires
        </button>
        <button className="ml-[17px] flex h-[52px] w-[308px] items-center justify-end gap-4 rounded-md border-2 border-[#cde3f5] pr-1 text-[#1780ea]">
          <svg width="17" height="22" viewBox="0 0 17 22"><path d="M0 0l17 11L0 22z" fill="#0080ff" /></svg>
          Start session (Aires)
        </button>
      </div>

      <div className={`${CARD} mt-8 h-[202px] px-6 text-[32px] font-bold`}>
        <div className="flex h-[102px] items-center border-b-2 border-[#f4f4f4] pr-[14px]">
          <MdFilterAlt size={36} />
          <span className="ml-[10px]">Filters</span>
          <MdRoute size={36} className="ml-[18px]" />
          <span className="mb-2.5 ml-auto"><Chevron dir="right" /></span>
        </div>
        <div className="flex h-[100px] items-center pr-[14px]">
          <MdTune size={36} />
          <span className="ml-[10px]">Display</span>
          <MdRoute size={36} className="ml-[18px]" />
          <span className="mb-2.5 ml-auto"><Chevron dir="right" /></span>
        </div>
      </div>

      <main className="mt-8 flex gap-2.5">
        {COINS.map(c => <CoinColumn key={c.symbol} coin={c} />)}
      </main>
    </div>
  )
}
